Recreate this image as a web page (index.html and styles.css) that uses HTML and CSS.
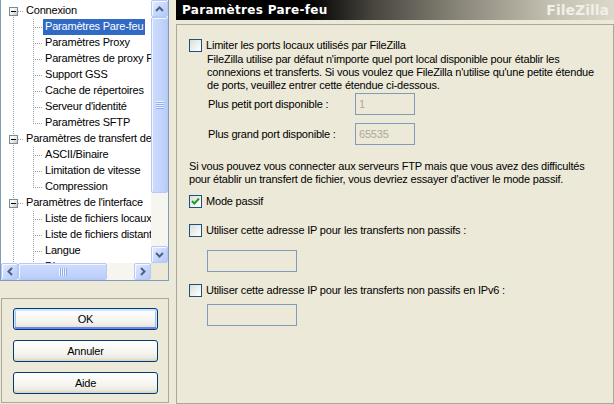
FILE: index.html
```html
<!DOCTYPE html>
<html lang="fr">
<head>
<meta charset="utf-8">
<title>Paramètres</title>
<link rel="stylesheet" href="styles.css">
</head>
<body>
<div class="dialog">
  <div class="left">
    <div class="tree">
      <div class="tree-body">
        <div class="tree-items">
          <div class="row"><span class="g r first"><span class="exp"></span></span><span class="lbl">Connexion</span></div>
          <div class="row"><span class="g v"></span><span class="g c"></span><span class="lbl sel">Paramètres Pare-feu</span></div>
          <div class="row"><span class="g v"></span><span class="g c"></span><span class="lbl">Paramètres Proxy</span></div>
          <div class="row"><span class="g v"></span><span class="g c"></span><span class="lbl">Paramètres de proxy FTP</span></div>
          <div class="row"><span class="g v"></span><span class="g c"></span><span class="lbl">Support GSS</span></div>
          <div class="row"><span class="g v"></span><span class="g c"></span><span class="lbl">Cache de répertoires</span></div>
          <div class="row"><span class="g v"></span><span class="g c"></span><span class="lbl">Serveur d'identité</span></div>
          <div class="row"><span class="g v"></span><span class="g c last"></span><span class="lbl">Paramètres SFTP</span></div>
          <div class="row"><span class="g r"><span class="exp"></span></span><span class="lbl">Paramètres de transfert de fichiers</span></div>
          <div class="row"><span class="g v"></span><span class="g c"></span><span class="lbl">ASCII/Binaire</span></div>
          <div class="row"><span class="g v"></span><span class="g c"></span><span class="lbl">Limitation de vitesse</span></div>
          <div class="row"><span class="g v"></span><span class="g c last"></span><span class="lbl">Compression</span></div>
          <div class="row"><span class="g r"><span class="exp"></span></span><span class="lbl">Paramètres de l'interface</span></div>
          <div class="row"><span class="g v"></span><span class="g c"></span><span class="lbl">Liste de fichiers locaux</span></div>
          <div class="row"><span class="g v"></span><span class="g c"></span><span class="lbl">Liste de fichiers distants</span></div>
          <div class="row"><span class="g v"></span><span class="g c"></span><span class="lbl">Langue</span></div>
          <div class="row"><span class="g v"></span><span class="g c"></span><span class="lbl">Divers</span></div>
        </div>
        <div class="vscroll">
          <div class="sb-btn"><svg width="9" height="6" viewBox="0 0 9 6"><polyline points="1,5 4.5,1.5 8,5" fill="none" stroke="#4d6185" stroke-width="2"/></svg></div>
          <div class="thumb-v"><span class="grip-v"></span></div>
          <div class="track"></div>
          <div class="sb-btn"><svg width="9" height="6" viewBox="0 0 9 6"><polyline points="1,1 4.5,4.5 8,1" fill="none" stroke="#4d6185" stroke-width="2"/></svg></div>
        </div>
      </div>
      <div class="hscroll-row">
        <div class="hscroll">
          <div class="sb-btn"><svg width="6" height="9" viewBox="0 0 6 9"><polyline points="5,1 1.5,4.5 5,8" fill="none" stroke="#4d6185" stroke-width="2"/></svg></div>
          <div class="thumb-h"><span class="grip-h"></span></div>
          <div class="track"></div>
          <div class="sb-btn"><svg width="6" height="9" viewBox="0 0 6 9"><polyline points="1,1 4.5,4.5 1,8" fill="none" stroke="#4d6185" stroke-width="2"/></svg></div>
        </div>
        <div class="corner"></div>
      </div>
    </div>
    <div class="buttons">
      <button class="btn default">OK</button>
      <button class="btn">Annuler</button>
      <button class="btn">Aide</button>
    </div>
  </div>

  <div class="right">
    <div class="header">
      <span class="title">Paramètres Pare-feu</span>
      <span class="brand">FileZilla</span>
    </div>
    <div class="panel">
      <div class="chk-row first-chk"><span class="cb"></span><span>Limiter les ports locaux utilisés par FileZilla</span></div>
      <div class="desc">FileZilla utilise par défaut n'importe quel port local disponible pour établir les<br>connexions et transferts. Si vous voulez que FileZilla n'utilise qu'une petite étendue<br>de ports, veuillez entrer cette étendue ci-dessous.</div>
      <div class="port-row p1"><span class="port-label">Plus petit port disponible :</span><span class="input-s">1</span></div>
      <div class="port-row p2"><span class="port-label">Plus grand port disponible :</span><span class="input-s">65535</span></div>
      <div class="para">Si vous pouvez vous connecter aux serveurs FTP mais que vous avez des difficultés<br>pour établir un transfert de fichier, vous devriez essayer d'activer le mode passif.</div>
      <div class="chk-row passive"><span class="cb"><svg width="11" height="11" viewBox="0 0 11 11"><polyline points="2,5 4.3,7.5 9,2.5" fill="none" stroke="#21a121" stroke-width="2"/></svg></span><span>Mode passif</span></div>
      <div class="chk-row ip4"><span class="cb"></span><span>Utiliser cette adresse IP pour les transferts non passifs :</span></div>
      <div class="input-l ip4-in"></div>
      <div class="chk-row ip6"><span class="cb"></span><span>Utiliser cette adresse IP pour les transferts non passifs en IPv6 :</span></div>
      <div class="input-l ip6-in"></div>
    </div>
  </div>
</div>
</body>
</html>
```

FILE: styles.css
```css
* { box-sizing: border-box; }

body {
  margin: 0;
  width: 614px;
  height: 404px;
  overflow: hidden;
  background: #ece9d8;
  font-family: "Liberation Sans", Arial, sans-serif;
  font-size: 11px;
  letter-spacing: -0.2px;
  color: #000;
}

.dialog {
  display: grid;
  grid-template-columns: 169px 438px;
  column-gap: 7px;
  height: 404px;
}

.left { display: flex; flex-direction: column; }

/* ---------- tree ---------- */
.tree {
  height: 281px;
  border: 1px solid #7f9db9;
  border-top: none;
  background: #fff;
  display: flex;
  flex-direction: column;
}

.tree-body { display: flex; height: 263px; }

.tree-items {
  width: 150px;
  height: 263px;
  overflow: hidden;
  padding-top: 3px;
}

.row {
  display: flex;
  height: 16px;
  padding-left: 4px;
  white-space: nowrap;
}

.g {
  width: 19px;
  height: 16px;
  flex: none;
  background-repeat: no-repeat;
}

.g.v {
  background-image: repeating-linear-gradient(to bottom, #a0a0a0 0 1px, transparent 1px 2px);
  background-size: 1px 16px;
  background-position: 8px 0;
}

.g.c {
  background-image:
    repeating-linear-gradient(to bottom, #a0a0a0 0 1px, transparent 1px 2px),
    repeating-linear-gradient(to right, #a0a0a0 0 1px, transparent 1px 2px);
  background-size: 1px 16px, 10px 1px;
  background-position: 9px 0, 9px 8px;
}

.g.c.last { background-size: 1px 9px, 10px 1px; }

.g.r {
  background-image:
    repeating-linear-gradient(to bottom, #a0a0a0 0 1px, transparent 1px 2px),
    repeating-linear-gradient(to right, #a0a0a0 0 1px, transparent 1px 2px);
  background-size: 1px 16px, 6px 1px;
  background-position: 8px 0, 13px 8px;
}

.g.r.first { background-size: 1px 4px, 6px 1px; background-position: 8px 12px, 13px 8px; }

.exp {
  display: flex;
  align-items: center;
  justify-content: center;
  width: 9px;
  height: 9px;
  margin: 4px 0 0 4px;
  border: 1px solid #7a8a99;
  background: linear-gradient(135deg, #ffffff 0%, #f2f2ee 45%, #c8c8bd 100%);
}

.exp::after {
  content: "";
  width: 5px;
  height: 1px;
  background: #000;
}

.lbl {
  height: 16px;
  line-height: 15px;
  padding: 0 2px;
}

.lbl.sel { background: #316ac5; color: #fff; }

/* ---------- scrollbars ---------- */
.vscroll {
  width: 17px;
  display: flex;
  flex-direction: column;
  background: #f6f5f0;
}

.hscroll-row { display: flex; height: 17px; }

.hscroll {
  width: 150px;
  display: flex;
  background: #f6f5f0;
}

.corner { width: 17px; background: #ece9d8; }

.sb-btn {
  width: 17px;
  height: 17px;
  flex: none;
  display: flex;
  align-items: center;
  justify-content: center;
  border: 1px solid #b6c8f4;
  border-radius: 2px;
  background: linear-gradient(135deg, #e4ecfe 0%, #c8d8fc 50%, #b4c9f9 100%);
  box-shadow: inset 1px 1px 0 #f7f9ff;
}

.thumb-v {
  height: 176px;
  flex: none;
  display: flex;
  align-items: center;
  justify-content: center;
  border: 1px solid #b6c8f4;
  border-radius: 2px;
  background: linear-gradient(to right, #cddbfd 0%, #c3d4fc 60%, #b8cbf9 100%);
  box-shadow: inset 1px 1px 0 #f2f6ff;
}

.grip-v {
  width: 8px;
  height: 8px;
  background: repeating-linear-gradient(to bottom, #eef4fe 0 1px, #8cb0f8 1px 2px);
}

.thumb-h {
  width: 89px;
  flex: none;
  display: flex;
  align-items: center;
  justify-content: center;
  border: 1px solid #b6c8f4;
  border-radius: 2px;
  background: linear-gradient(to bottom, #cddbfd 0%, #c3d4fc 60%, #b8cbf9 100%);
  box-shadow: inset 1px 1px 0 #f2f6ff;
}

.grip-h {
  width: 8px;
  height: 8px;
  background: repeating-linear-gradient(to right, #eef4fe 0 1px, #8cb0f8 1px 2px);
}

.track { flex: 1; }

/* ---------- buttons ---------- */
.buttons {
  margin: 17px 0 0 1px;
  height: 105px;
  border: 1px solid #aca899;
  padding: 9px 10px 0 11px;
  display: flex;
  flex-direction: column;
  gap: 10px;
}

.btn {
  height: 22px;
  padding: 0;
  border: 1px solid #003c74;
  border-radius: 3px;
  background: linear-gradient(to bottom, #ffffff 0%, #f5f4ef 60%, #ebe9e0 85%, #d6d0c5 100%);
  font-family: "Liberation Sans", Arial, sans-serif;
  font-size: 11px;
  letter-spacing: -0.2px;
  color: #000;
}

.btn.default {
  box-shadow: inset 0 1px 0 1px #cee7ff, inset 0 -1px 0 1px #6982ee, inset 0 0 0 2px #a4c2f2;
}

/* ---------- right side ---------- */
.right { display: flex; flex-direction: column; }

.header {
  height: 20px;
  flex: none;
  display: flex;
  align-items: center;
  justify-content: space-between;
  padding: 0 5px 0 6px;
  background: linear-gradient(to right, #000 0%, #000 30%, #47453e 45%, #8a877a 65%, #c2bfb1 85%, #dcd9cb 100%);
}

.title {
  font-family: "DejaVu Sans", sans-serif;
  font-weight: bold;
  font-size: 12px;
  letter-spacing: 0.3px;
  color: #fff;
}

.brand {
  font-family: "DejaVu Sans", sans-serif;
  font-weight: bold;
  font-size: 14px;
  letter-spacing: 0;
  color: #f1efe7;
}

.panel {
  margin-top: 4px;
  flex: 1;
  border: 1px solid #aca899;
  padding-left: 12px;
  display: flex;
  flex-direction: column;
  align-items: flex-start;
  white-space: nowrap;
}

.chk-row {
  display: flex;
  align-items: center;
  gap: 4px;
  height: 13px;
  line-height: 13px;
}

.cb {
  width: 13px;
  height: 13px;
  flex: none;
  display: flex;
  align-items: center;
  justify-content: center;
  border: 1px solid #1c5180;
  background: linear-gradient(135deg, #dcdcd7 0%, #f2f2ef 60%, #ffffff 100%);
}

.first-chk { margin-top: 14px; }

.desc { margin: 1px 0 0 18px; line-height: 13px; }

.port-row {
  display: flex;
  align-items: center;
  height: 22px;
  margin-left: 19px;
}

.port-row.p1 { margin-top: 1px; }
.port-row.p2 { margin-top: 8px; }

.port-label { width: 147px; }

.input-s {
  width: 60px;
  height: 22px;
  border: 1px solid #7f9db9;
  padding-left: 3px;
  line-height: 20px;
  color: #aca899;
}

.para { margin-top: 15px; line-height: 13px; }

.passive { margin-top: 9px; }
.ip4 { margin-top: 16px; }

.input-l {
  width: 90px;
  height: 22px;
  margin-left: 18px;
  border: 1px solid #7f9db9;
}

.ip4-in { margin-top: 13px; }
.ip6 { margin-top: 12px; }
.ip6-in { margin-top: 7px; }
```
